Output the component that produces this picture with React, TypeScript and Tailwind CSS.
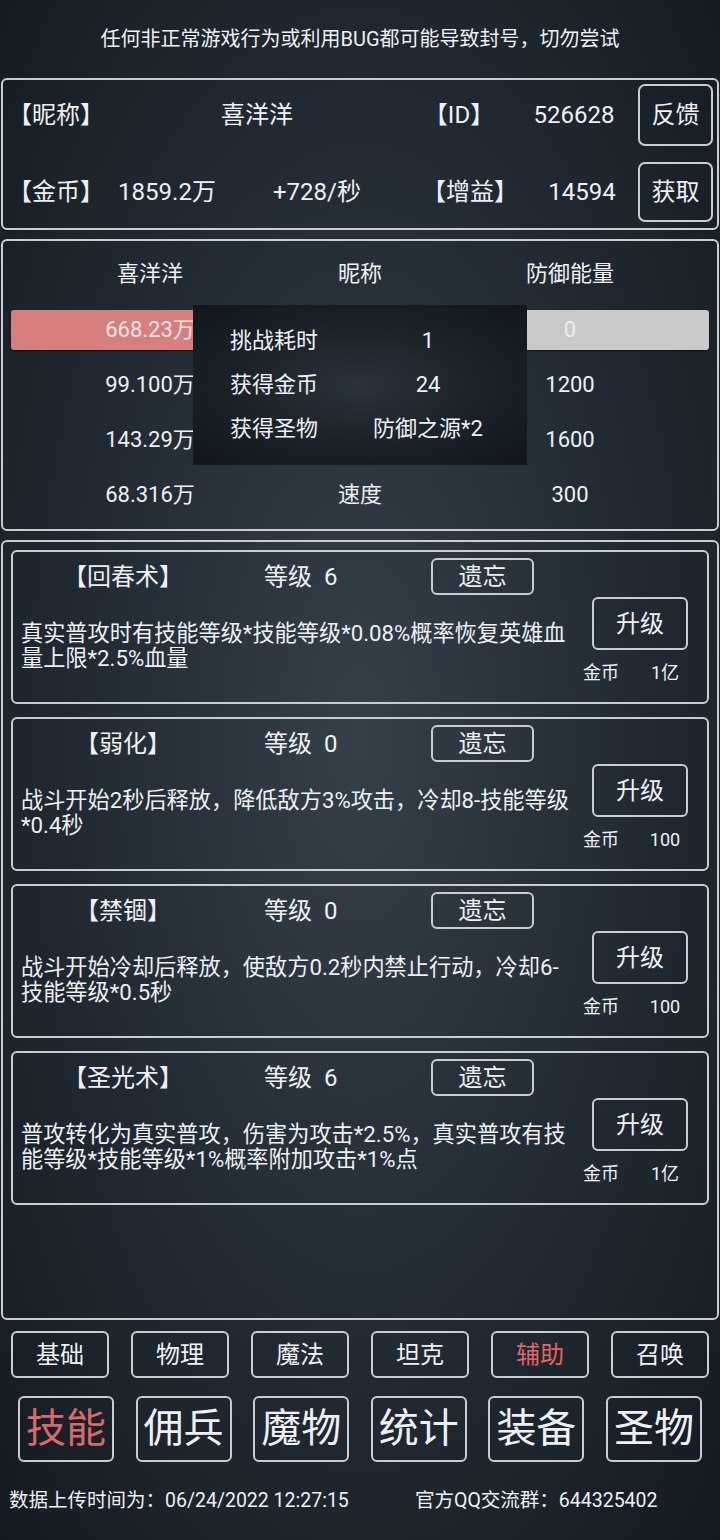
const FONT = "font-['Roboto','Noto_Sans_CJK_SC',sans-serif]";

type Skill = {
  name: string;
  level: number;
  desc: string;
  cost: string;
};

const skills: Skill[] = [
  {
    name: "【回春术】",
    level: 6,
    desc: "真实普攻时有技能等级*技能等级*0.08%概率恢复英雄血量上限*2.5%血量",
    cost: "1亿",
  },
  {
    name: "【弱化】",
    level: 0,
    desc: "战斗开始2秒后释放，降低敌方3%攻击，冷却8-技能等级*0.4秒",
    cost: "100",
  },
  {
    name: "【禁锢】",
    level: 0,
    desc: "战斗开始冷却后释放，使敌方0.2秒内禁止行动，冷却6-技能等级*0.5秒",
    cost: "100",
  },
  {
    name: "【圣光术】",
    level: 6,
    desc: "普攻转化为真实普攻，伤害为攻击*2.5%，真实普攻有技能等级*技能等级*1%概率附加攻击*1%点",
    cost: "1亿",
  },
];

const subTabs = ["基础", "物理", "魔法", "坦克", "辅助", "召唤"];
const mainTabs = ["技能", "佣兵", "魔物", "统计", "装备", "圣物"];

function SkillCard({ skill }: { skill: Skill }) {
  return (
    <div className="flex h-[154px] rounded-[6px] border-2 border-[#c9cdd1]">
      {/* left: title + description */}
      <div className="w-[570px] shrink-0">
        <div className="mt-[6px] flex h-[37px] items-center text-[24px] leading-none">
          <div className="w-[220px] whitespace-nowrap text-center">{skill.name}</div>
          <div className="ml-[31px] w-[167px] whitespace-nowrap [word-spacing:6px]">等级 {skill.level}</div>
          <button className="flex h-[37px] w-[103px] items-center justify-center rounded-[6px] border-2 border-[#c9cdd1] text-[24px]">
            遗忘
          </button>
        </div>
        <p className="ml-[8px] mt-[26px] w-[553px] text-[22.2px] leading-[25px]">{skill.desc}</p>
      </div>
      {/* right: upgrade */}
      <div className="flex flex-1 flex-col">
        <button className="ml-[9px] mt-[45px] flex h-[53px] w-[96px] items-center justify-center rounded-[6px] border-2 border-[#c9cdd1] text-[24px]">
          升级
        </button>
        <div className="mt-[11px] flex h-[24px] items-center text-[18px] leading-none">
          <span className="w-[60px]">金币</span>
          <span className="w-[44px] text-center">{skill.cost}</span>
        </div>
      </div>
    </div>
  );
}

export default function App() {
  return (
    <div
      className={`${FONT} relative h-[1540px] w-[720px] overflow-hidden bg-[radial-gradient(ellipse_at_50%_48%,#34404a_0%,#242e37_45%,#141a21_100%)] text-[#eef0f2]`}
    >
      {/* warning */}
      <div className="flex h-[78px] items-center justify-center text-[20px] leading-none">
        任何非正常游戏行为或利用BUG都可能导致封号，切勿尝试
      </div>

      {/* player info */}
      <div className="mx-[1px] h-[152px] rounded-[6px] border-2 border-[#c9cdd1] text-[24px] leading-none">
        <div className="mt-[4px] flex h-[62px] items-center">
          <div className="w-[107px] whitespace-nowrap pl-[5px]">【昵称】</div>
          <div className="w-[294px] text-center">喜洋洋</div>
          <div className="w-[110px] text-center">【ID】</div>
          <div className="w-[120px] text-center">526628</div>
          <button className="ml-[4px] flex h-[62px] w-[75px] items-center justify-center rounded-[7px] border-2 border-[#c9cdd1]">
            反馈
          </button>
        </div>
        <div className="mt-[16px] flex h-[60px] items-center">
          <div className="w-[107px] whitespace-nowrap pl-[5px]">【金币】</div>
          <div className="w-[114px] whitespace-nowrap text-center">1859.2万</div>
          <div className="w-[186px] whitespace-nowrap text-center">+728/秒</div>
          <div className="w-[120px] whitespace-nowrap text-center">【增益】</div>
          <div className="w-[104px] text-center">14594</div>
          <button className="ml-[4px] flex h-[60px] w-[75px] items-center justify-center rounded-[7px] border-2 border-[#c9cdd1]">
            获取
          </button>
        </div>
      </div>

      {/* battle panel */}
      <div className="relative mx-[1px] mt-[9px] h-[292px] rounded-[6px] border-2 border-[#c9cdd1] text-[22px] leading-none">
        <div className="mt-[5px] flex h-[55px] items-center">
          <div className="w-[294px] text-center">喜洋洋</div>
          <div className="w-[126px] text-center">昵称</div>
          <div className="w-[294px] text-center">防御能量</div>
        </div>
        <div className="mx-[8px] mt-[9px] flex h-[40px] justify-between">
          <div className="flex w-[345px] items-center rounded-[3px] bg-[#d77e7f] shadow-[0_1px_2px_rgba(0,0,0,0.6)]">
            <span className="w-[278px] text-center text-[#f4e4e4]">668.23万</span>
          </div>
          <div className="flex w-[345px] items-center justify-end rounded-[3px] bg-[#c9c9c9] shadow-[0_1px_2px_rgba(0,0,0,0.6)]">
            <span className="w-[278px] text-center text-[#eeeeee]">0</span>
          </div>
        </div>
        <div className="mt-[7px] flex h-[55px] items-center">
          <div className="w-[294px] text-center">99.100万</div>
          <div className="w-[126px] text-center" />
          <div className="w-[294px] text-center">1200</div>
        </div>
        <div className="flex h-[55px] items-center">
          <div className="w-[294px] text-center">143.29万</div>
          <div className="w-[126px] text-center" />
          <div className="w-[294px] text-center">1600</div>
        </div>
        <div className="flex h-[55px] items-center">
          <div className="w-[294px] text-center">68.316万</div>
          <div className="w-[126px] text-center">速度</div>
          <div className="w-[294px] text-center">300</div>
        </div>

        {/* result popup */}
        <div className="absolute left-[190px] top-[64px] h-[160px] w-[334px] bg-[radial-gradient(ellipse_at_center,#29333c_0%,#1a2128_55%,#10161c_100%)] pt-[14px]">
          {[
            ["挑战耗时", "1"],
            ["获得金币", "24"],
            ["获得圣物", "防御之源*2"],
          ].map(([k, v]) => (
            <div key={k} className="flex h-[44px] items-center">
              <div className="w-[147px] pl-[37px]">{k}</div>
              <div className="w-[176px] whitespace-nowrap text-center">{v}</div>
            </div>
          ))}
        </div>
      </div>

      {/* skills */}
      <div className="mx-[1px] mt-[9px] h-[780px] rounded-[6px] border-2 border-[#c9cdd1] px-[8px] pt-[8px]">
        <div className="flex flex-col gap-[13px]">
          {skills.map((s) => (
            <SkillCard key={s.name} skill={s} />
          ))}
        </div>
      </div>

      {/* sub tabs */}
      <div className="mt-[11px] flex gap-[22px] px-[11px]">
        {subTabs.map((t) => (
          <button
            key={t}
            className={`flex h-[47px] w-[98px] items-center justify-center rounded-[6px] border-2 border-[#c9cdd1] text-[24px] leading-none ${
              t === "辅助" ? "text-[#e06767]" : ""
            }`}
          >
            {t}
          </button>
        ))}
      </div>

      {/* main tabs */}
      <div className="mt-[18px] flex gap-[21.6px] px-[18px]">
        {mainTabs.map((t) => (
          <button
            key={t}
            className={`flex h-[66px] w-[96px] items-center justify-center rounded-[6px] border-2 border-[#c9cdd1] text-[40px] leading-none ${
              t === "技能" ? "text-[#d96a6a]" : ""
            }`}
          >
            {t}
          </button>
        ))}
      </div>

      {/* footer */}
      <div className="mt-[26px] flex h-[26px] items-center text-[19.5px] leading-none">
        <span className="ml-[9px] w-[406px] whitespace-nowrap">数据上传时间为：06/24/2022 12:27:15</span>
        <span className="whitespace-nowrap">官方QQ交流群：644325402</span>
      </div>
    </div>
  );
}
